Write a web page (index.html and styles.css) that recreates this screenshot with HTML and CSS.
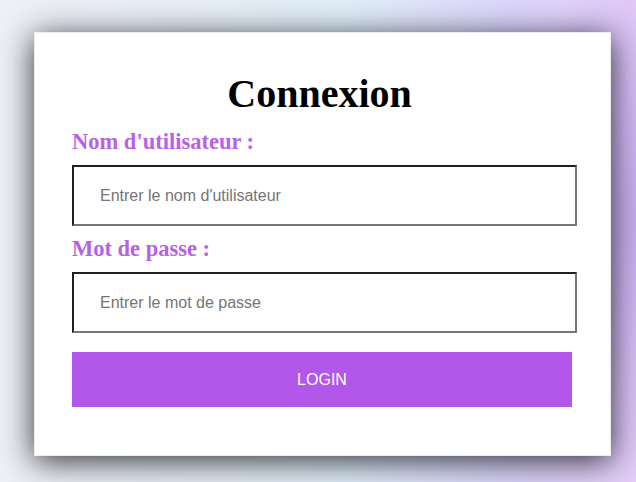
FILE: index.html
```html
<!DOCTYPE html>
<html lang="fr">
<head>
<meta charset="utf-8">
<title>Connexion</title>
<link rel="stylesheet" href="styles.css">
</head>
<body>
<form class="card">
  <h1 class="title">Connexion</h1>
  <label class="label" for="user">Nom d'utilisateur :</label>
  <input class="field" id="user" type="text" placeholder="Entrer le nom d'utilisateur">
  <label class="label" for="pass">Mot de passe :</label>
  <input class="field" id="pass" type="password" placeholder="Entrer le mot de passe">
  <button class="btn" type="button">LOGIN</button>
</form>
</body>
</html>
```
FILE: styles.css
```css
html, body {
  margin: 0;
  height: 100%;
}
body {
  background:
    radial-gradient(ellipse 120px 260px at 100% 45%, rgba(190, 160, 240, 0.7), rgba(190, 160, 240, 0) 100%),
    linear-gradient(90deg, #efeff6 0%, #e6eef6 35%, #e0eef9 55%, #dcd6fb 80%, #e4cdf8 100%);
  padding-top: 32px;
  box-sizing: border-box;
  overflow: hidden;
}
.card {
  margin-left: 34px;
  width: 577px;
  height: 424px;
  box-sizing: border-box;
  background: #fff;
  border: 1px solid #ececec;
  box-shadow: 0 5px 30px rgba(15, 15, 25, 0.85);
  padding: 38px 34px 0 37px;
  display: flex;
  flex-direction: column;
  align-items: flex-start;
}
.title {
  align-self: stretch;
  margin: 0 0 12px 0;
  padding-right: 9px;
  text-align: center;
  font-family: "Liberation Serif", serif;
  font-size: 40px;
  line-height: 46px;
  font-weight: bold;
  color: #000;
}
.label {
  font-family: "Liberation Serif", serif;
  font-weight: bold;
  font-size: 22.5px;
  line-height: 26px;
  color: #b961e6;
  margin-bottom: 10px;
}
.field {
  width: 505px;
  height: 61px;
  box-sizing: border-box;
  border-style: solid;
  border-width: 2px;
  border-color: #1f1f1f #767676 #767676 #1f1f1f;
  padding: 0 0 0 26px;
  margin: 0 0 10px 0;
  font-family: "Liberation Sans", Arial, sans-serif;
  font-size: 16px;
  color: #222;
  background: #fff;
  outline: none;
}
.field::placeholder {
  color: #757575;
}
.btn {
  margin-top: 9px;
  width: 500px;
  height: 55px;
  border: none;
  background: #b357eb;
  color: #fff;
  font-family: "Liberation Sans", Arial, sans-serif;
  font-size: 16px;
  padding: 0;
  cursor: pointer;
}
```
